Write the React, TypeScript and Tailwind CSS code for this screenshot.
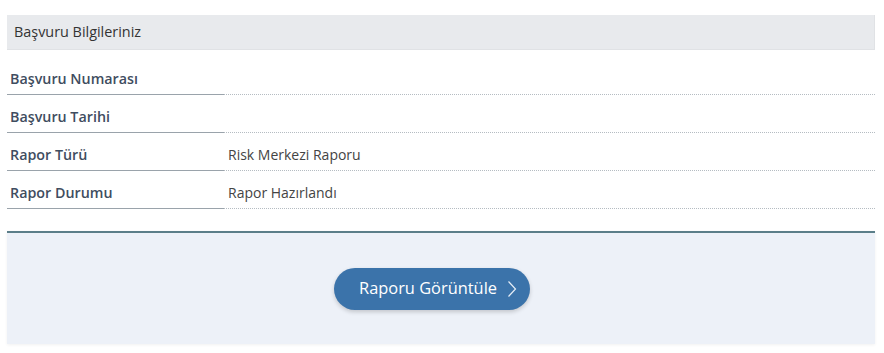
import React from "react";

const rows: { label: string; value: string }[] = [
  { label: "Başvuru Numarası", value: "" },
  { label: "Başvuru Tarihi", value: "" },
  { label: "Rapor Türü", value: "Risk Merkezi Raporu" },
  { label: "Rapor Durumu", value: "Rapor Hazırlandı" },
];

export default function App() {
  return (
    <div
      className="w-[884px] h-[353px] bg-white pt-[15px] px-[7px]"
      style={{ fontFamily: '"Open Sans", "Noto Sans", sans-serif' }}
    >
      <div className="w-[868px]">
        <div className="h-[35px] bg-[#e8eaed] border-b border-r border-[#e0e2e5] flex items-center pl-[7px] text-[14.4px] text-[#333]">
          Başvuru Bilgileriniz
        </div>
        <div className="mt-[7px]">
          {rows.map((r) => (
            <div key={r.label} className="flex h-[38px]">
              <div className="w-[217px] border-b border-[#9aa3ab] pt-[12px] pl-[3px] text-[14.3px] leading-[20px] font-semibold text-[#3f4d60]">
                {r.label}
              </div>
              <div className="flex-1 border-b border-dotted border-[#b5bcc2] pt-[12px] pl-[4px] text-[14px] leading-[20px] text-[#444]">
                {r.value}
              </div>
            </div>
          ))}
        </div>
        <div className="mt-[22px] h-[113px] border-t-2 border-[#5b7e89] bg-[#edf1f8] shadow-[0_1px_3px_rgba(0,0,0,0.06)] flex items-center justify-center pr-[18px]">
          <button className="h-[42px] w-[196px] rounded-full bg-[#3b73aa] text-white text-[16.4px] flex items-center justify-center gap-[10px] shadow-[0_2px_4px_rgba(0,0,0,0.18)] pl-[12px]">
            <span>Raporu Görüntüle</span>
            <svg width="10" height="18" viewBox="0 0 10 18" fill="none">
              <path d="M1.5 1.5 L8.5 9 L1.5 16.5" stroke="#e6eef7" strokeWidth="1.2" />
            </svg>
          </button>
        </div>
      </div>
    </div>
  );
}
